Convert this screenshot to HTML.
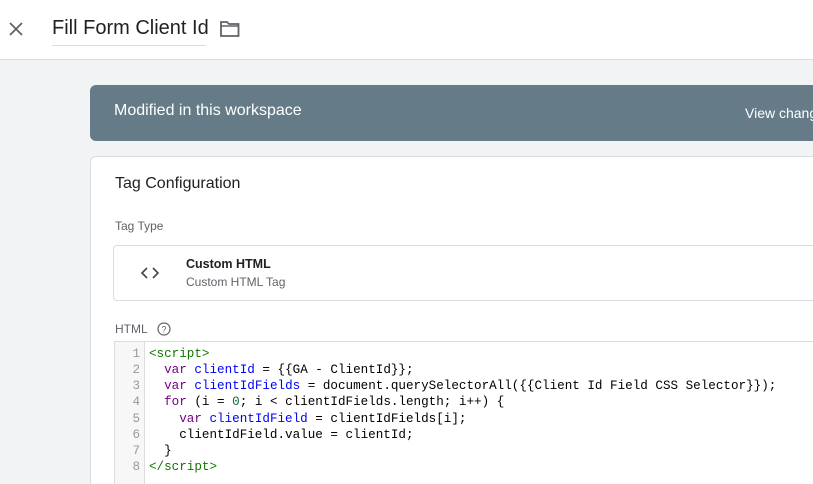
<!DOCTYPE html>
<html><head><style>
*{margin:0;padding:0;box-sizing:border-box}
html,body{width:813px;height:484px;overflow:hidden}
body{background:#f1f3f4;font-family:"Liberation Sans",sans-serif;position:relative}
.hdr{position:absolute;left:0;top:0;width:813px;height:60px;background:#fff;border-bottom:1px solid #dadce0}
.title{position:absolute;left:52px;top:17px;font-size:20px;color:#202124;padding-bottom:5px;border-bottom:1px solid #dadce0;width:154px;white-space:nowrap}
.banner{position:absolute;left:90px;top:85px;width:760px;height:56px;background:#657c88;border-radius:6px;color:#fff}
.card{position:absolute;left:90px;top:156px;width:760px;height:360px;background:#fff;border:1px solid #dadce0;border-radius:6px}
.tt{position:absolute;left:113px;top:245px;width:720px;height:56px;border:1px solid #dadce0;border-radius:4px}
.code{position:absolute;left:114px;top:341px;width:720px;height:170px;border:1px solid #dadce0;background:#fff;font-family:"Liberation Mono",monospace;font-size:12.6px;line-height:16.15px}
.gut{position:absolute;left:0;top:0;width:30px;height:100%;background:#f7f7f7;border-right:1px solid #ddd;color:#999;text-align:right;padding:4px 4px 0 0}
.src{position:absolute;left:34px;top:4px;white-space:pre;color:#000}
.t{color:#170}.k{color:#708}.v{color:#00f}.n{color:#164}
</style></head><body>
<div class="hdr">
<svg style="position:absolute;left:9px;top:22px" width="14" height="14" viewBox="0 0 14 14"><path d="M1 1L13 13M13 1L1 13" stroke="#5f6368" stroke-width="1.8"/></svg>
<div class="title">Fill Form Client Id</div>
<svg style="position:absolute;left:219px;top:20px" width="22" height="18" viewBox="0 0 22 18"><path d="M2 2h6l2 2h9.5v12H2z" fill="none" stroke="#5f6368" stroke-width="1.8"/><path d="M2 6h17.5" stroke="#5f6368" stroke-width="1.5"/></svg>
</div>
<div class="banner"><span style="position:absolute;left:24px;top:17px;font-size:16px">Modified in this workspace</span><span style="position:absolute;left:655px;top:20px;font-size:14px">View changes</span></div>
<div class="card">
<div style="position:absolute;left:24px;top:18px;font-size:16px;color:#202124">Tag Configuration</div>
<div style="position:absolute;left:24px;top:62px;font-size:12px;color:#5f6368">Tag Type</div>
<div style="position:absolute;left:24px;top:165px;font-size:12px;color:#5f6368">HTML</div>
<svg style="position:absolute;left:66px;top:165px" width="14" height="14" viewBox="0 0 14 14"><circle cx="7" cy="7" r="6" fill="none" stroke="#5f6368" stroke-width="1.2"/><text x="7" y="10.5" font-size="9" text-anchor="middle" fill="#5f6368" font-family="Liberation Sans">?</text></svg>
</div>
<div class="tt">
<svg style="position:absolute;left:26px;top:21px" width="20" height="12" viewBox="0 0 20 12"><path d="M7 1L2 6l5 5M13 1l5 5-5 5" fill="none" stroke="#444" stroke-width="1.6"/></svg>
<div style="position:absolute;left:72px;top:11px;font-size:12.5px;font-weight:bold;color:#202124">Custom HTML</div>
<div style="position:absolute;left:72px;top:29px;font-size:12px;color:#5f6368">Custom HTML Tag</div>
</div>
<div class="code">
<div class="gut">1<br>2<br>3<br>4<br>5<br>6<br>7<br>8</div>
<div class="src"><span class="t">&lt;script&gt;</span>
  <span class="k">var</span> <span class="v">clientId</span> = {{GA - ClientId}};
  <span class="k">var</span> <span class="v">clientIdFields</span> = document.querySelectorAll({{Client Id Field CSS Selector}});
  <span class="k">for</span> (i = <span class="n">0</span>; i &lt; clientIdFields.length; i++) {
    <span class="k">var</span> <span class="v">clientIdField</span> = clientIdFields[i];
    clientIdField.value = clientId;
  }
<span class="t">&lt;/script&gt;</span></div>
</div>
</body></html>
